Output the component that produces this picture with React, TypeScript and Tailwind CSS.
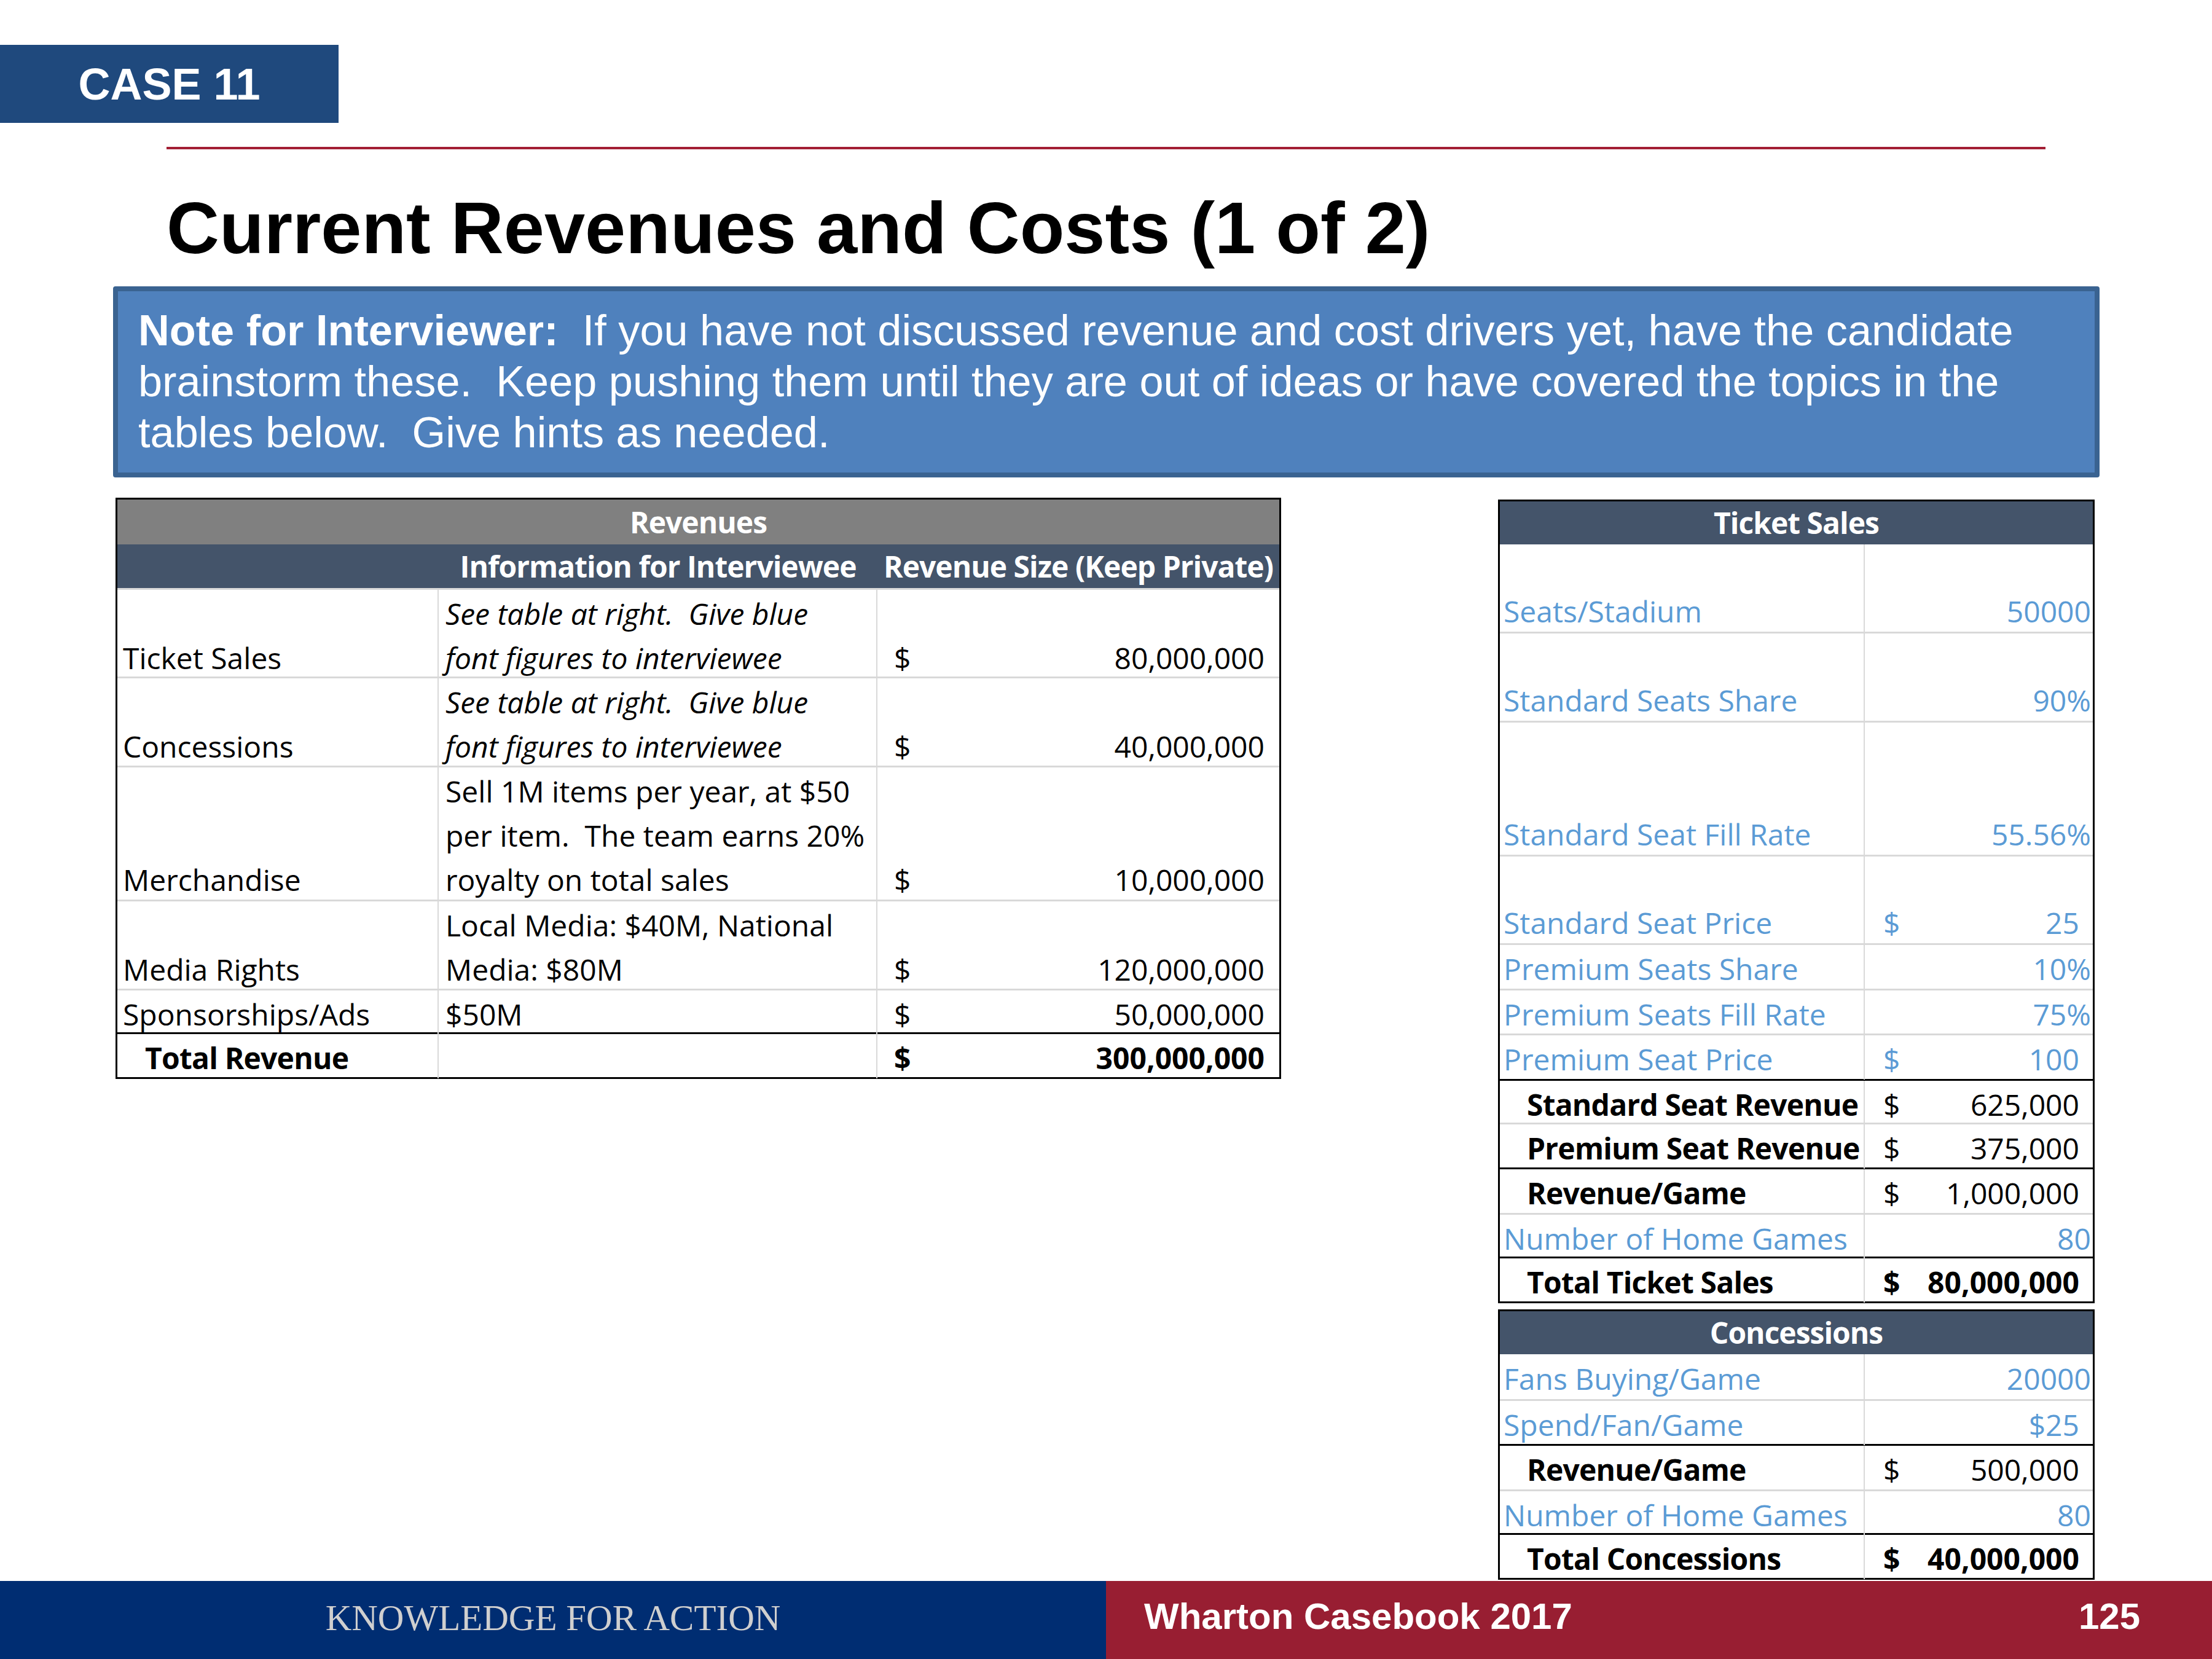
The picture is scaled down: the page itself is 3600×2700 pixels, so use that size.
import React from 'react';

const SANS = "font-['Liberation_Sans',Arial,Helvetica,sans-serif]";
const TBL = "font-['Open_Sans','Noto_Sans',sans-serif]";

type Acc = { v: string; bold?: boolean };

function LeftRow({
  h,
  black,
  label,
  info,
  italic,
  acc,
  total,
}: {
  h: string;
  black?: boolean;
  label: string;
  info: string[];
  italic?: boolean;
  acc: Acc;
  total?: boolean;
}) {
  return (
    <div
      className={`grid grid-cols-[523px_714px_654px] ${h} ${
        total ? '' : black ? 'border-b-[3px] border-b-black' : 'border-b-[3px] border-b-[#d9d9d9]'
      }`}
    >
      <div
        className={`flex flex-col justify-end whitespace-nowrap border-r-2 border-r-[#d9d9d9] ${
          total ? 'pl-[45px] font-bold tracking-[-0.8px]' : 'pl-[9px]'
        }`}
      >
        <div className="translate-y-[3px]">{label}</div>
      </div>
      <div
        className={`flex flex-col justify-end whitespace-pre border-r-2 border-r-[#d9d9d9] pl-[11px] ${
          italic ? 'italic' : ''
        }`}
      >
        <div className="translate-y-[3px]">
          {info.map((l, i) => (
            <div key={i}>{l}</div>
          ))}
        </div>
      </div>
      <div className={`flex items-end justify-between pl-[27px] pr-[24px] ${acc.bold ? 'font-bold' : ''}`}>
        <span className="translate-y-[3px]">$</span>
        <span className="translate-y-[3px]">{acc.v}</span>
      </div>
    </div>
  );
}

type RProps = {
  h: string;
  border: 'gray' | 'black' | 'none';
  label: string;
  kind: 'input' | 'calc';
  value: string;
  dollar?: boolean;
  boldValue?: boolean;
};

function RightRow({ h, border, label, kind, value, dollar, boldValue }: RProps) {
  const b =
    border === 'gray'
      ? 'border-b-[3px] border-b-[#d9d9d9]'
      : border === 'black'
      ? 'border-b-[3px] border-b-black'
      : '';
  const color = kind === 'input' ? 'text-[#5b9bd5]' : 'text-black';
  return (
    <div className={`grid grid-cols-[594px_371px] ${h} ${b} ${color}`}>
      <div
        className={`flex flex-col justify-end whitespace-nowrap border-r-2 border-r-[#d9d9d9] ${
          kind === 'calc' ? 'pl-[44px] font-bold tracking-[-0.8px]' : 'pl-[6px]'
        }`}
      >
        <div className="translate-y-[3px]">{label}</div>
      </div>
      {dollar ? (
        <div className={`flex items-end justify-between pl-[30px] pr-[22px] ${boldValue ? 'font-bold' : ''}`}>
          <span className="translate-y-[3px]">$</span>
          <span className="translate-y-[3px]">{value}</span>
        </div>
      ) : (
        <div
          className={`flex flex-col items-end justify-end ${
            value.startsWith('$') ? 'pr-[22px]' : 'pr-[3px]'
          }`}
        >
          <div className="translate-y-[3px]">{value}</div>
        </div>
      )}
    </div>
  );
}

export default function App() {
  return (
    <div className="relative flex h-[2700px] w-[3600px] flex-col overflow-hidden bg-white">
      {/* Case tag */}
      <div
        className={`mt-[73px] flex h-[127px] w-[551px] items-center justify-center bg-[#1f497d] text-[72px] font-bold text-white ${SANS}`}
      >
        CASE 11
      </div>

      {/* red rule */}
      <div className="ml-[271px] mt-[39px] h-[4px] w-[3058px] bg-[#a31f34]" />

      {/* title */}
      <h1 className={`ml-[271px] mt-[68px] text-[119px] leading-[120px] font-bold text-black ${SANS}`}>
        Current Revenues and Costs (1 of 2)
      </h1>

      {/* note */}
      <div
        className={`ml-[184px] mt-[35px] h-[311px] w-[3233px] rounded-[4px] border-[8px] border-[#3a6391] bg-[#4f81bd] pl-[33px] pt-[22px] text-[70.3px] leading-[83px] text-white ${SANS}`}
      >
        <div className="whitespace-pre">
          <span className="font-bold">Note for Interviewer:</span>
          {'  If you have not discussed revenue and cost drivers yet, have the candidate'}
        </div>
        <div className="whitespace-pre">
          {'brainstorm these.  Keep pushing them until they are out of ideas or have covered the topics in the'}
        </div>
        <div className="whitespace-pre">{'tables below.  Give hints as needed.'}</div>
      </div>

      {/* tables */}
      <div className={`mt-[33px] flex items-start text-[48px] leading-[72px] text-black ${TBL}`}>
        {/* Revenues table */}
        <div className="ml-[188px] w-[1897px] border-[3px] border-black bg-white">
          <div className="flex h-[73px] items-center justify-center bg-[#808080] font-bold tracking-[-1px] text-white">
            Revenues
          </div>
          <div className="grid h-[74px] grid-cols-[523px_714px_654px] items-center border-b-[3px] border-b-[#d9d9d9] bg-[#44546a] text-center font-bold tracking-[-1px] text-white">
            <div />
            <div className="whitespace-nowrap">Information for Interviewee</div>
            <div className="whitespace-nowrap">Revenue Size (Keep Private)</div>
          </div>
          <LeftRow
            h="h-[144px]"
            label="Ticket Sales"
            italic
            info={['See table at right.  Give blue', 'font figures to interviewee']}
            acc={{ v: '80,000,000' }}
          />
          <LeftRow
            h="h-[145px]"
            label="Concessions"
            italic
            info={['See table at right.  Give blue', 'font figures to interviewee']}
            acc={{ v: '40,000,000' }}
          />
          <LeftRow
            h="h-[218px]"
            label="Merchandise"
            info={['Sell 1M items per year, at $50', 'per item.  The team earns 20%', 'royalty on total sales']}
            acc={{ v: '10,000,000' }}
          />
          <LeftRow
            h="h-[145px]"
            label="Media Rights"
            info={['Local Media: $40M, National', 'Media: $80M']}
            acc={{ v: '120,000,000' }}
          />
          <LeftRow h="h-[71px]" black label="Sponsorships/Ads" info={['$50M']} acc={{ v: '50,000,000' }} />
          <LeftRow h="h-[70px]" total label="Total Revenue" info={['']} acc={{ v: '300,000,000', bold: true }} />
        </div>

        {/* Right column */}
        <div className="ml-[353px] mt-[3px] flex w-[971px] flex-col">
          <div className="border-[3px] border-black bg-white">
            <div className="flex h-[70px] items-center justify-center bg-[#44546a] font-bold tracking-[-1px] text-white">
              Ticket Sales
            </div>
            <RightRow h="h-[145px]" border="gray" label="Seats/Stadium" kind="input" value="50000" />
            <RightRow h="h-[145px]" border="gray" label="Standard Seats Share" kind="input" value="90%" />
            <RightRow h="h-[218px]" border="gray" label="Standard Seat Fill Rate" kind="input" value="55.56%" />
            <RightRow h="h-[144px]" border="gray" label="Standard Seat Price" kind="input" dollar value="25" />
            <RightRow h="h-[74px]" border="gray" label="Premium Seats Share" kind="input" value="10%" />
            <RightRow h="h-[73px]" border="gray" label="Premium Seats Fill Rate" kind="input" value="75%" />
            <RightRow h="h-[74px]" border="black" label="Premium Seat Price" kind="input" dollar value="100" />
            <RightRow h="h-[71px]" border="gray" label="Standard Seat Revenue" kind="calc" dollar value="625,000" />
            <RightRow h="h-[73px]" border="black" label="Premium Seat Revenue" kind="calc" dollar value="375,000" />
            <RightRow h="h-[74px]" border="gray" label="Revenue/Game" kind="calc" dollar value="1,000,000" />
            <RightRow h="h-[71px]" border="black" label="Number of Home Games" kind="input" value="80" />
            <RightRow
              h="h-[70px]"
              border="none"
              label="Total Ticket Sales"
              kind="calc"
              dollar
              boldValue
              value="80,000,000"
            />
          </div>

          <div className="mt-[10px] border-[3px] border-black bg-white">
            <div className="flex h-[70px] items-center justify-center bg-[#44546a] font-bold tracking-[-1px] text-white">
              Concessions
            </div>
            <RightRow h="h-[76px]" border="gray" label="Fans Buying/Game" kind="input" value="20000" />
            <RightRow h="h-[73px]" border="black" label="Spend/Fan/Game" kind="input" value="$25" />
            <RightRow h="h-[74px]" border="gray" label="Revenue/Game" kind="calc" dollar value="500,000" />
            <RightRow h="h-[71px]" border="black" label="Number of Home Games" kind="input" value="80" />
            <RightRow
              h="h-[70px]"
              border="none"
              label="Total Concessions"
              kind="calc"
              dollar
              boldValue
              value="40,000,000"
            />
          </div>
        </div>
      </div>

      {/* footer */}
      <div className="mt-auto flex h-[127px]">
        <div className="flex w-[1800px] items-center justify-center bg-[#002d72] pb-[6px] font-['Liberation_Serif','Times_New_Roman',serif] text-[59px] text-[#cfcfcf]">
          KNOWLEDGE FOR ACTION
        </div>
        <div
          className={`flex flex-1 items-center justify-between bg-[#981e32] pb-[12px] pl-[62px] pr-[117px] text-[60px] font-bold text-white ${SANS}`}
        >
          <span>Wharton Casebook 2017</span>
          <span>125</span>
        </div>
      </div>
    </div>
  );
}
